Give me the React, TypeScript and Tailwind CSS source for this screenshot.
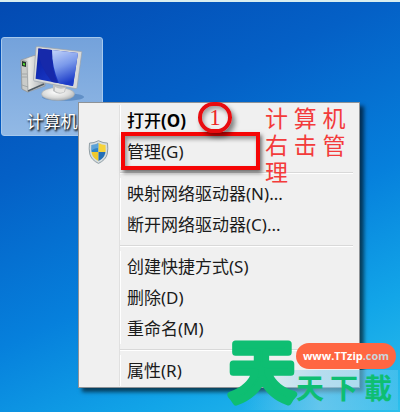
import React from "react";

interface MenuItem {
  label: string;
  hotkey: string;
  suffix?: string;
  bold?: boolean;
  shield?: boolean;
  marked?: boolean;
}

const groups: MenuItem[][] = [
  [
    { label: "打开", hotkey: "(O)", bold: true },
    { label: "管理", hotkey: "(G)", shield: true, marked: true }
  ],
  [
    { label: "映射网络驱动器", hotkey: "(N)", suffix: "..." },
    { label: "断开网络驱动器", hotkey: "(C)", suffix: "..." }
  ],
  [
    { label: "创建快捷方式", hotkey: "(S)" },
    { label: "删除", hotkey: "(D)" },
    { label: "重命名", hotkey: "(M)" }
  ],
  [{ label: "属性", hotkey: "(R)" }]
];

function ComputerIcon() {
  return (
    <svg viewBox="0 0 66 58" className="h-[58px] w-[66px]" aria-hidden="true">
      <defs>
        <linearGradient id="screen" x1="0" y1="0" x2="1" y2="1">
          <stop offset="0" stopColor="#071a9c" />
          <stop offset="0.5" stopColor="#1532bd" />
          <stop offset="1" stopColor="#1a3fd0" />
        </linearGradient>
        <linearGradient id="glare" x1="0" y1="0" x2="0.3" y2="1">
          <stop offset="0" stopColor="#c3d4fa" />
          <stop offset="0.5" stopColor="#7b9aeb" />
          <stop offset="1" stopColor="#1c3cc8" />
        </linearGradient>
        <linearGradient id="tower" x1="0" y1="0" x2="1" y2="0">
          <stop offset="0" stopColor="#b3b5b5" />
          <stop offset="0.35" stopColor="#e9e9e6" />
          <stop offset="1" stopColor="#a9adb1" />
        </linearGradient>
        <radialGradient id="stand" cx="0.45" cy="0.35" r="0.7">
          <stop offset="0" stopColor="#ffffff" />
          <stop offset="0.6" stopColor="#dadbda" />
          <stop offset="1" stopColor="#a2a7ac" />
        </radialGradient>
      </defs>
      <ellipse cx="44" cy="51" rx="21" ry="4" fill="#3c6fae" opacity="0.5" />
      <path d="M2 14 15 9.5 26 11v29L9 46l-6-3z" fill="url(#tower)" stroke="#90979d" strokeWidth="0.7" />
      <path d="M2 14 8 15.5 9 46 3 43z" fill="#c9cbc9" stroke="#8b9093" strokeWidth="0.6" />
      <path d="m3 15 4 1v5l-4-1z" fill="#26372a" />
      <path d="m4 17 2 .5v2L4 19z" fill="#55db32" />
      <path d="M3 28h5M3 31h5M3 39l6 2" stroke="#929999" strokeWidth="0.7" />
      <path d="M9 45 25 38" stroke="#4e5962" strokeWidth="1.5" />
      <ellipse cx="39" cy="48" rx="16.5" ry="6.5" fill="url(#stand)" stroke="#a8adb0" strokeWidth="0.6" />
      <path d="M34 38h14l-2 8q-6 4-12-1z" fill="#bfc1c2" />
      <path d="M36 41q5 3 10 1l-1 4q-5 2-9-1z" fill="#e7e7e5" />
      <path d="M18.5.5 62 5.5q1 0 .8 1L58 41.5q-.3 1.6-2 1L15.5 35q-1-.4-1-1.4L17 1.5q.2-1.2 1.5-1z" fill="#d7d9da" stroke="#9aa2ab" strokeWidth="0.7" />
      <path d="M19.4 2.5 59 7l-5 33L16.6 32.7z" fill="url(#screen)" />
      <path d="M33 4.1 59 7l-5 33-14-2.8Q33 22 33 4.1z" fill="url(#glare)" />
      <path d="M19.4 2.5 33 4.1Q32 23 39 37l-6-1Q19 19 19.4 2.5z" fill="#1629aa" />
    </svg>
  );
}

function ShieldIcon() {
  return (
    <svg viewBox="0 0 21 24" className="h-6 w-[21px]" aria-hidden="true">
      <defs>
        <clipPath id="shieldClip">
          <path d="M10.5 3q3.5 2 7 2 .5 5-.3 8.5Q16 18 10.500 21 5 18 3.800 13.500 3 10 3.500 5q3.500 0 7-2z" />
        </clipPath>
      </defs>
      <path d="M10.500.700q4.500 2.400 9 2.400.8 6-.3 11Q17.700 20 10.500 23.400 3.300 20 1.800 14.100.700 9 1.500 3.100q4.500 0 9-2.400z" fill="#d5dde0" stroke="#87959d" strokeWidth="0.9" />
      <g clipPath="url(#shieldClip)">
        <path d="M0 0h10.500v12H0z" fill="#2f83c7" />
        <path d="M10.500 0H21v12H10.500z" fill="#f6d33b" />
        <path d="M0 12h10.500v12H0z" fill="#f1c92d" />
        <path d="M10.500 12H21v12H10.500z" fill="#246fb7" />
        <path d="M3 4h7.500v4Q6 8 3 11z" fill="#7ab7e2" opacity="0.6" />
      </g>
    </svg>
  );
}

function DesktopShortcut() {
  return (
    <button
      type="button"
      className="absolute top-[37px] left-px flex h-[99px] w-[102px] flex-col items-center rounded-[3px] border border-[#a6c8ec] bg-linear-to-b from-[#74a2db] to-[#92b9e5] pt-2"
    >
      <ComputerIcon />
      <span className="mt-2 text-[17px] leading-5 text-white [text-shadow:1px_1px_2px_#000,1px_2px_2px_#0008]">
        计算机
      </span>
    </button>
  );
}

function ContextMenu() {
  return (
    <div
      role="menu"
      className="absolute top-[102px] left-[78px] w-[282px] border border-[#8e9296] bg-[#f0f0f0] px-[2px] pt-[2px] pb-px shadow-[4px_4px_4px_#0009]"
    >
      {groups.map((group, i) => (
        <div key={i} className="flex flex-col">
          {i > 0 && (
            <div className="flex h-[11px]">
              <div className="w-[39px] border-r border-[#e0e0e0]" />
              <div role="separator" className="mt-[5px] mr-1 mb-1 flex-1 border-b border-white bg-[#d9d9d9]" />
            </div>
          )}
          {group.map((item) => (
            <button
              key={item.label}
              type="button"
              role="menuitem"
              className="flex h-[31px] items-stretch text-left text-[17px] leading-5 text-[#1b1b1b]"
            >
              <span className="flex w-[39px] items-center justify-center border-r border-[#e0e0e0] pr-1">
                {item.shield && <ShieldIcon />}
              </span>
              <span className="relative flex flex-1 items-center border-l border-white pl-[6px]">
                {item.marked && (
                  <span className="absolute -top-1 left-0 h-[38px] w-[139px] border-4 border-[#f50505] shadow-[2px_3px_4px_#0008,inset_2px_3px_4px_#0006]" />
                )}
                <span className={item.bold ? "font-medium text-black" : ""}>
                  {item.label}
                  <span className={item.bold ? "font-bold" : ""}>{item.hotkey}</span>
                  {item.suffix}
                </span>
              </span>
            </button>
          ))}
        </div>
      ))}
    </div>
  );
}

function Annotation() {
  return (
    <>
      <span className="absolute top-[102px] left-[198px] flex h-[31px] w-[34px] items-center justify-center rounded-full border-4 border-[#e80c10] font-['Liberation_Serif',serif] text-[23px] leading-none text-[#ee2528] shadow-[3px_4px_5px_#0007,inset_2px_3px_4px_#0005]">
        1
      </span>
      <p className="absolute top-[106px] left-[265px] font-['Liberation_Serif','Noto_Sans_CJK_SC',serif] text-[23px] leading-[27px] whitespace-nowrap text-[#f33b3b]">
        计 算 机
        <br />
        右 击 管
        <br />
        理
      </p>
    </>
  );
}

function SiteLogo() {
  return (
    <a href="#" className="absolute top-[338px] left-[226px] flex h-[72px] w-[172px]" aria-label="天天下載">
      <span className="absolute inset-y-0 top-8 right-0 left-4 bg-linear-to-r from-[#c2dff300] via-[#8fd0ee99] to-[#59c4ee88]" />
      <svg viewBox="0 0 172 72" className="relative h-[72px] w-[172px] overflow-visible">
        <g
          fill="#0ebe72"
          stroke="#0ebe72"
          strokeLinejoin="round"
          fontFamily="'Noto Sans CJK SC', sans-serif"
          fontWeight="700"
        >
          <text x="3" y="58" fontSize="66" strokeWidth="7">天</text>
          <text x="70" y="61" fontSize="28" strokeWidth="0">天</text>
          <text x="104" y="61" fontSize="28" strokeWidth="0">下</text>
          <text x="138" y="61" fontSize="28" strokeWidth="0">載</text>
        </g>
      </svg>
      <span className="absolute top-[5px] right-[2px] flex h-[26px] w-[100px] items-center justify-center rounded-full bg-[#ff6642] font-['Open_Sans',sans-serif] text-[11px] leading-4 font-bold text-white">
        www.TTzip<span className="text-[#c9d5dc]">.com</span>
      </span>
    </a>
  );
}

export default function App() {
  return (
    <main className="relative min-h-screen overflow-hidden border-t-2 border-[#d9eef0] bg-linear-[155deg,#034ab2_0%,#0460c6_30%,#0680dc_58%,#12a5e8_80%,#2cc0ec_100%] font-['Noto_Sans','Noto_Sans_CJK_SC',sans-serif]">
      <div className="absolute -top-[2px] left-0 w-full">
        <DesktopShortcut />
        <ContextMenu />
        <Annotation />
        <SiteLogo />
      </div>
    </main>
  );
}
